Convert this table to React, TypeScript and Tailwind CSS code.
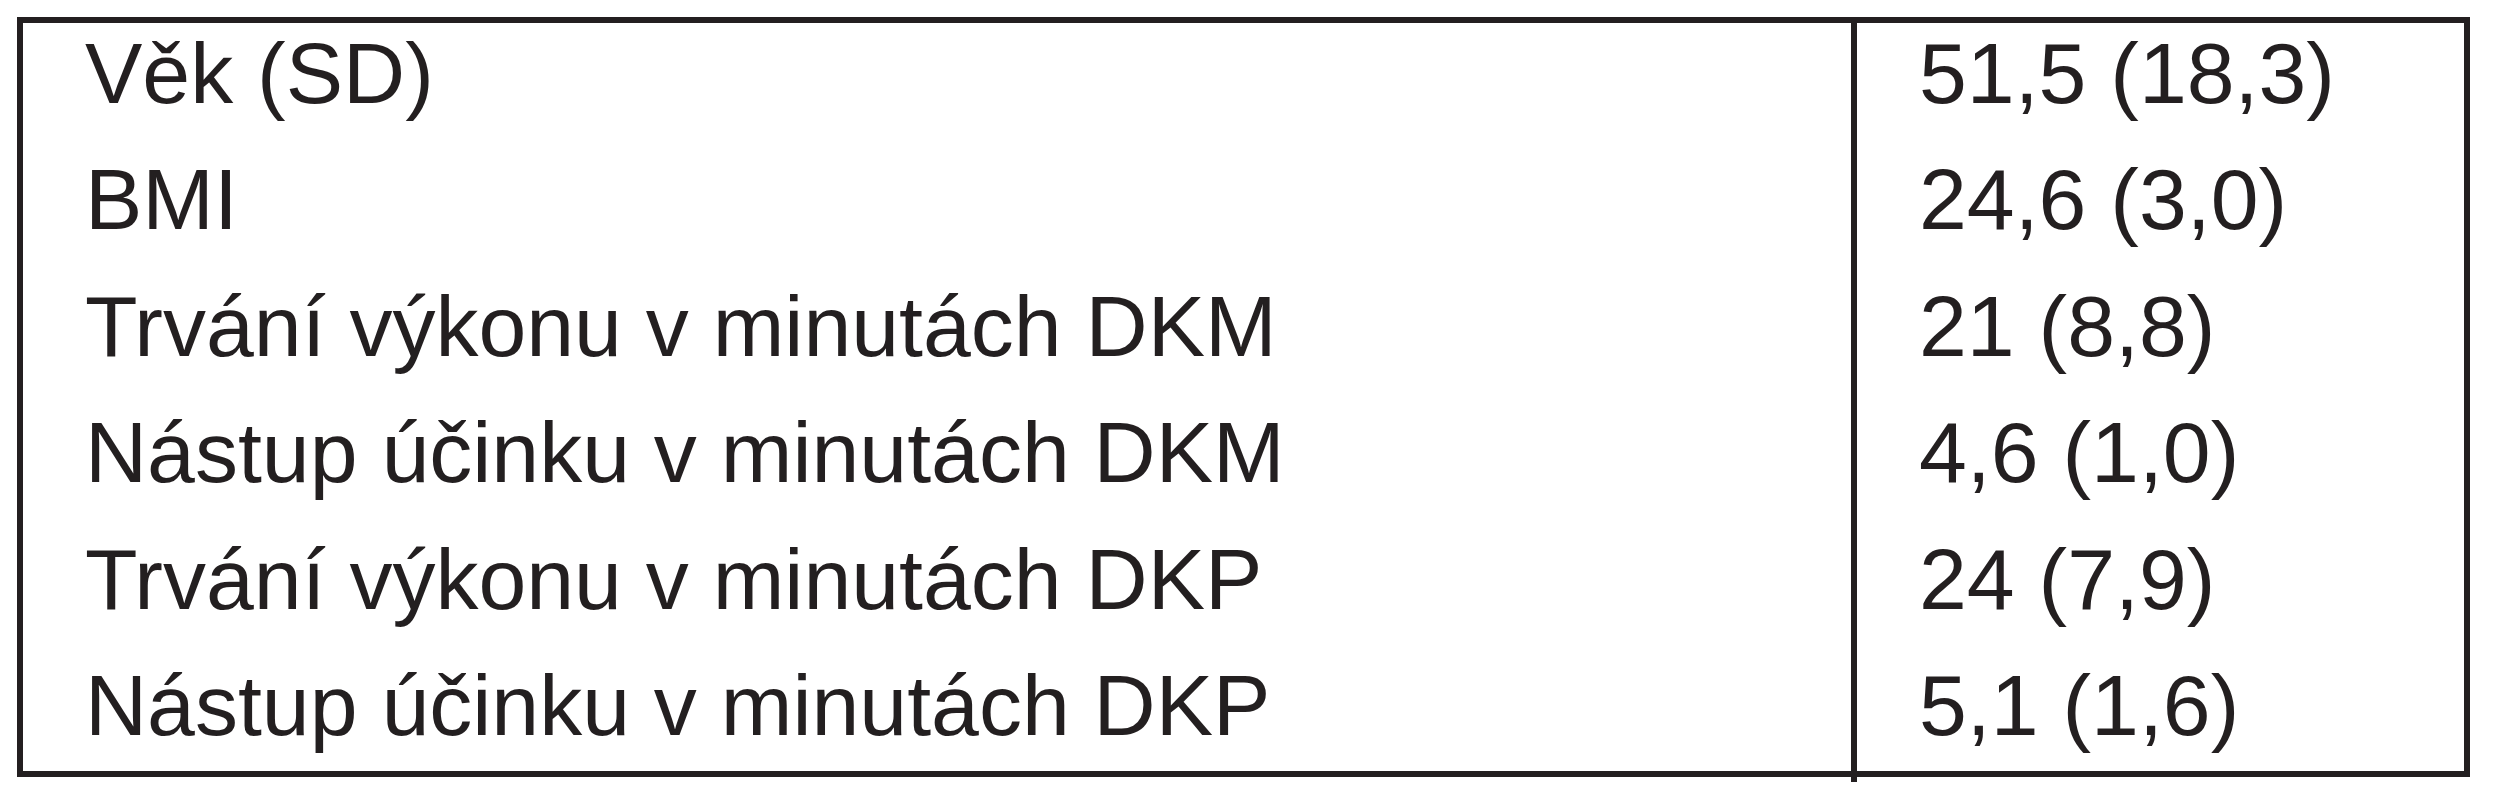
import React from "react";

const labels = [
  "Věk (SD)",
  "BMI",
  "Trvání výkonu v minutách DKM",
  "Nástup účinku v minutách DKM",
  "Trvání výkonu v minutách DKP",
  "Nástup účinku v minutách DKP",
];

const values = [
  "51,5 (18,3)",
  "24,6 (3,0)",
  "21 (8,8)",
  "4,6 (1,0)",
  "24 (7,9)",
  "5,1 (1,6)",
];

export default function App() {
  return (
    <div
      className="w-[2505px] h-[800px] bg-white pt-[17px] pl-[17px] text-[#231f20]"
      style={{ fontFamily: '"Liberation Sans", Arial, sans-serif' }}
    >
      <div className="relative flex w-[2453px] border-[6px] border-[#231f20]">
        <div className="w-[1828px] flex flex-col gap-[30.4px] pt-[2px] pb-[18px] pl-[62px]">
          {labels.map((l) => (
            <div key={l} className="text-[86px] leading-[96px] whitespace-nowrap">
              {l}
            </div>
          ))}
        </div>
        <div className="flex-1 flex flex-col gap-[30.4px] pt-[2px] pb-[18px] pl-[62px] border-l-[6px] border-[#231f20]">
          {values.map((v) => (
            <div key={v} className="text-[86px] leading-[96px] whitespace-nowrap">
              {v}
            </div>
          ))}
        </div>
        <div className="absolute left-[1828px] top-full w-[6px] h-[11px] bg-[#231f20]" />
      </div>
    </div>
  );
}
